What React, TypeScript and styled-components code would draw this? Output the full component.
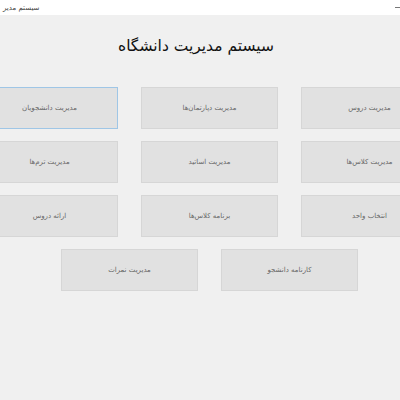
import React from 'react'
import styled, { createGlobalStyle } from 'styled-components'

const GlobalStyle = createGlobalStyle`
	html, body {
		margin: 0;
		padding: 0;
		background: #f0f0f0;
		overflow: hidden;
	}

	body {
		font-family: 'DejaVu Sans', 'Noto Sans', sans-serif;
	}
`

const rows: string[][] = [
	['مدیریت دروس', 'مدیریت دپارتمان‌ها', 'مدیریت دانشجویان'],
	['مدیریت کلاس‌ها', 'مدیریت اساتید', 'مدیریت ترم‌ها'],
	['انتخاب واحد', 'برنامه کلاس‌ها', 'ارائه دروس'],
	['کارنامه دانشجو', 'مدیریت نمرات']
]

const focused = 'مدیریت دانشجویان'

export default function App() {
	return (
		<>
			<GlobalStyle />
			<Window>
				<TitleBar>
					<Caption>سیستم مدیر</Caption>
					<Minimize />
				</TitleBar>
				<Heading>سیستم مدیریت دانشگاه</Heading>
				<Board>
					{rows.map((row, i) => (
						<Row key={i}>
							{row.map(label => (
								<MenuButton key={label} $focused={label === focused}>
									{label}
								</MenuButton>
							))}
						</Row>
					))}
				</Board>
			</Window>
		</>
	)
}

const Window = styled.div`
	width: 400px;
	height: 400px;
	background: #f0f0f0;
	overflow: hidden;
`

const TitleBar = styled.div`
	height: 15px;
	background: #fff;
	display: flex;
	align-items: center;
	justify-content: space-between;
	padding: 0 0 0 3px;
`

const Caption = styled.span`
	font-size: 7px;
	color: #444;
	direction: rtl;
`

const Minimize = styled.span`
	width: 5px;
	height: 1px;
	background: #777;
	margin-bottom: 1px;
`

const Heading = styled.h1`
	margin: 0;
	padding: 22px 8px 0 0;
	height: 52px;
	box-sizing: border-box;
	text-align: center;
	font-size: 15.5px;
	font-weight: normal;
	color: #111;
	direction: rtl;
`

const Board = styled.div`
	margin: 20px 0 0 -19px;
	width: 457px;
	display: flex;
	flex-direction: column;
	gap: 12px;
`

const Row = styled.div`
	display: flex;
	justify-content: center;
	gap: 23px;
	direction: rtl;
`

const MenuButton = styled.div<{ $focused?: boolean }>`
	width: 137px;
	height: 42px;
	box-sizing: border-box;
	display: flex;
	align-items: center;
	justify-content: center;
	background: #e1e1e1;
	border: 1px solid ${p => (p.$focused ? '#9fc6e6' : '#d6d6d6')};
	font-size: 7px;
	color: #666;
`
